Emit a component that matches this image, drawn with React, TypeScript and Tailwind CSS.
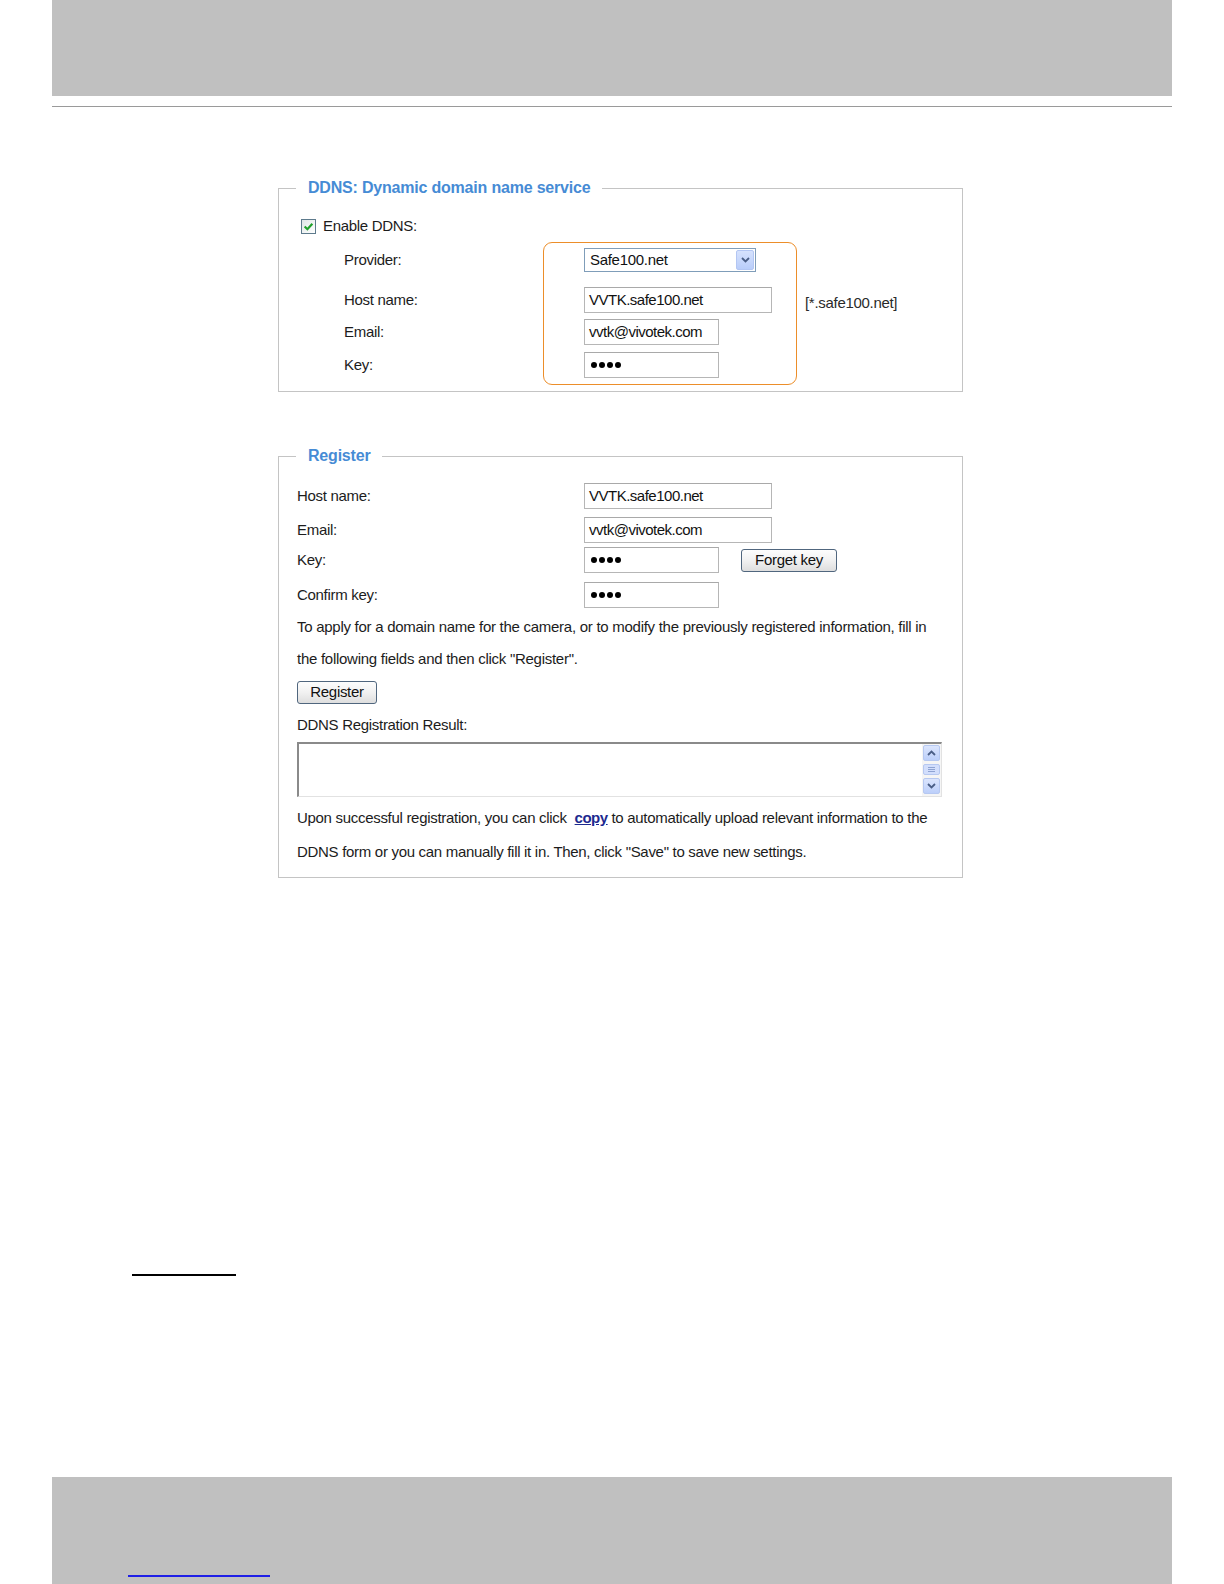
import React from 'react'

// classic web-admin DDNS page, manual screenshot style
const FONT = "font-['Liberation_Sans',Arial,sans-serif]"

function Input({ value, w }: { value: string; w: string }) {
  return (
    <div className={`${w} h-[26px] border border-[#b6b6b6] border-t-[#a9a9a9] bg-white flex items-center pl-[4px] tracking-[-0.5px] text-[#111]`}>
      {value}
    </div>
  )
}

function Password({ w }: { w: string }) {
  return (
    <div className={`${w} h-[26px] border border-[#b6b6b6] border-t-[#a9a9a9] bg-white flex items-center gap-[2px] pl-[6px]`}>
      <span className="w-[6px] h-[6px] rounded-full bg-black" />
      <span className="w-[6px] h-[6px] rounded-full bg-black" />
      <span className="w-[6px] h-[6px] rounded-full bg-black" />
      <span className="w-[6px] h-[6px] rounded-full bg-black" />
    </div>
  )
}

function Button({ label, w }: { label: string; w: string }) {
  return (
    <div className={`${w} h-[23px] rounded-[3px] border border-[#50667e] bg-gradient-to-b from-[#fdfdfd] via-[#f1f1f1] to-[#dedede] flex items-center justify-center text-[#111]`}>
      {label}
    </div>
  )
}

function Checkbox() {
  return (
    <div className="w-[15px] h-[15px] border border-[#5d7a8c] bg-gradient-to-br from-[#dfe6e6] to-white flex items-center justify-center">
      <svg width="11" height="11" viewBox="0 0 10 10">
        <path d="M1.5 5 L4 7.5 L8.5 2.5" fill="none" stroke="#21a12c" strokeWidth="2" />
      </svg>
    </div>
  )
}

function Chevron({ up }: { up?: boolean }) {
  return (
    <svg width="9" height="6" viewBox="0 0 9 6">
      <path d={up ? 'M1 5 L4.5 1.5 L8 5' : 'M1 1 L4.5 4.5 L8 1'} fill="none" stroke="#4a5e86" strokeWidth="1.8" />
    </svg>
  )
}

export default function App() {
  return (
    <div className={`${FONT} w-[1224px] h-[1584px] bg-white text-[15px] tracking-[-0.3px] text-[#1c1c1c] overflow-hidden`}>
      {/* page header band */}
      <div className="mx-[52px] h-[96px] bg-[#c0c0c0]" />
      <div className="mx-[52px] mt-[10px] h-px bg-[#9a9a9a]" />

      {/* DDNS fieldset */}
      <div className="relative">
        <fieldset className="ml-[278px] mt-[71px] w-[685px] border border-[#c4c4c4] pb-[13px]">
          <legend className="ml-[17px] px-[12px] text-[16px] leading-[20px] font-bold tracking-[-0.2px] text-[#468bd5]">
            DDNS: Dynamic domain name service
          </legend>
          <div className="mt-[18px] h-[20px] flex items-center pl-[22px]">
            <Checkbox />
            <span className="ml-[7px]">Enable DDNS:</span>
          </div>
          <div className="mt-[12px] h-[24px] flex items-center pl-[65px]">
            <span className="w-[240px]">Provider:</span>
            <div className="w-[172px] h-[24px] border border-[#7f9db9] bg-white flex items-center justify-between pl-[5px] pr-[1px]">
              <span className="text-[#111]">Safe100.net</span>
              <div className="w-[18px] h-[20px] rounded-[2px] border border-[#b3c6f3] bg-gradient-to-b from-[#d6e2fd] to-[#b9cdfa] flex items-center justify-center">
                <Chevron />
              </div>
            </div>
          </div>
          <div className="mt-[15px] h-[26px] flex items-center pl-[65px]">
            <span className="w-[240px]">Host name:</span>
            <Input value="VVTK.safe100.net" w="w-[188px]" />
            <span className="ml-[33px] pt-[7px] text-[#2a2a2a]">[*.safe100.net]</span>
          </div>
          <div className="mt-[6px] h-[26px] flex items-center pl-[65px]">
            <span className="w-[240px]">Email:</span>
            <Input value="vvtk@vivotek.com" w="w-[135px]" />
          </div>
          <div className="mt-[7px] h-[26px] flex items-center pl-[65px]">
            <span className="w-[240px]">Key:</span>
            <Password w="w-[135px]" />
          </div>
        </fieldset>
        {/* orange highlight around the provider fields */}
        <div className="absolute left-[543px] top-[64px] w-[254px] h-[143px] rounded-[9px] border-[1.5px] border-[#ec8e2a]" />
      </div>

      {/* Register fieldset */}
      <fieldset className="ml-[278px] mt-[54px] w-[685px] border border-[#c4c4c4] pb-[8px]">
        <legend className="ml-[17px] px-[12px] text-[16px] leading-[20px] font-bold tracking-[-0.2px] text-[#468bd5]">
          Register
        </legend>
        <div className="mt-[17px] h-[26px] flex items-center pl-[18px]">
          <span className="w-[287px]">Host name:</span>
          <Input value="VVTK.safe100.net" w="w-[188px]" />
        </div>
        <div className="mt-[8px] h-[26px] flex items-center pl-[18px]">
          <span className="w-[287px]">Email:</span>
          <Input value="vvtk@vivotek.com" w="w-[188px]" />
        </div>
        <div className="mt-[4px] h-[26px] flex items-center pl-[18px]">
          <span className="w-[287px]">Key:</span>
          <Password w="w-[135px]" />
          <div className="ml-[22px]">
            <Button label="Forget key" w="w-[96px]" />
          </div>
        </div>
        <div className="mt-[9px] h-[26px] flex items-center pl-[18px]">
          <span className="w-[287px]">Confirm key:</span>
          <Password w="w-[135px]" />
        </div>
        <p className="mt-[3px] pl-[18px] leading-[32px] whitespace-nowrap tracking-[-0.27px]">
          To apply for a domain name for the camera, or to modify the previously registered information, fill in
          <br />
          the following fields and then click "Register".
        </p>
        <div className="mt-[6px] ml-[18px]">
          <Button label="Register" w="w-[80px]" />
        </div>
        <p className="mt-[10px] pl-[18px] leading-[22px]">DDNS Registration Result:</p>
        <div className="mt-[6px] ml-[18px] w-[645px] h-[55px] flex border-t-2 border-l-2 border-b border-r border-t-[#8a8a8a] border-l-[#8a8a8a] border-b-[#e2e2e2] border-r-[#e2e2e2] bg-white">
          <div className="flex-1" />
          <div className="w-[19px] bg-[#f5f5f5] flex flex-col items-center pt-[1px] gap-[3px]">
            <div className="w-[17px] h-[16px] rounded-[2px] border border-[#b6c8f1] bg-gradient-to-b from-[#dbe5fd] to-[#bccffa] flex items-center justify-center">
              <Chevron up />
            </div>
            <div className="w-[17px] h-[11px] rounded-[2px] border border-[#b6c8f1] bg-[#d2defc] flex flex-col items-center justify-center gap-[1px]">
              <span className="w-[7px] h-px bg-[#8ea3d2]" />
              <span className="w-[7px] h-px bg-[#8ea3d2]" />
              <span className="w-[7px] h-px bg-[#8ea3d2]" />
            </div>
            <div className="w-[17px] h-[16px] rounded-[2px] border border-[#b6c8f1] bg-gradient-to-b from-[#dbe5fd] to-[#bccffa] flex items-center justify-center">
              <Chevron />
            </div>
          </div>
        </div>
        <p className="mt-[4px] pl-[18px] leading-[34px] whitespace-nowrap tracking-[-0.3px]">
          Upon successful registration, you can click{' '}
          <span className="ml-[4px] font-bold text-[#1d2a8f] underline tracking-[-0.5px]">copy</span> to automatically upload relevant information to the
          <br />
          DDNS form or you can manually fill it in. Then, click "Save" to save new settings.
        </p>
      </fieldset>

      {/* note rule */}
      <div className="ml-[132px] mt-[396px] w-[104px] h-[2px] bg-black" />

      {/* footer band */}
      <div className="mx-[52px] mt-[201px] h-[107px] bg-[#c0c0c0] pt-[98px] pl-[76px]">
        <div className="w-[142px] h-[2px] bg-[#1f1fe6]" />
      </div>
    </div>
  )
}
